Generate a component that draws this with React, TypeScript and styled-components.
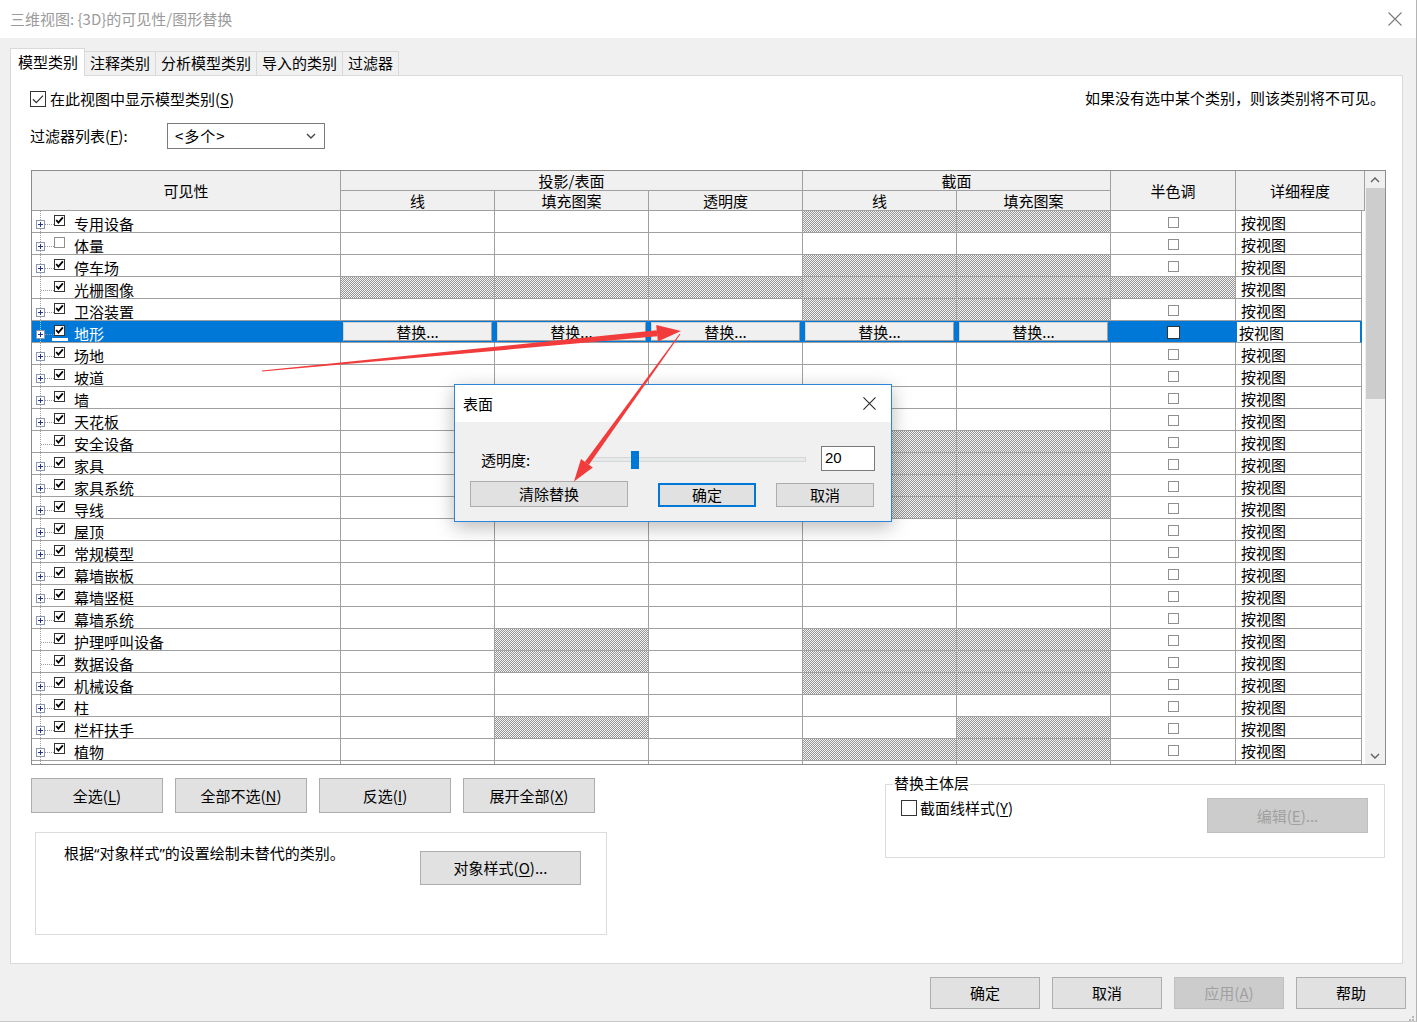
import React from 'react'
import styled, { createGlobalStyle, css } from 'styled-components'

const GlobalStyle = createGlobalStyle`
  html, body {
    margin: 0;
    padding: 0;
    background: #f0f0f0;
  }
  body {
    font-family: 'Noto Sans CJK SC', 'Noto Sans', sans-serif;
    font-size: 15px;
    color: #000;
  }
  * {
    box-sizing: border-box;
  }
`

type Row = {
  name: string
  plus: boolean
  on: boolean
  hatch: number[]
  selected?: boolean
  partial?: boolean
}

const rows: Row[] = [
  { name: '专用设备', plus: true, on: true, hatch: [3, 4] },
  { name: '体量', plus: true, on: false, hatch: [] },
  { name: '停车场', plus: true, on: true, hatch: [3, 4] },
  { name: '光栅图像', plus: false, on: true, hatch: [0, 1, 2, 3, 4, 5] },
  { name: '卫浴装置', plus: true, on: true, hatch: [3, 4] },
  { name: '地形', plus: true, on: true, hatch: [], selected: true },
  { name: '场地', plus: true, on: true, hatch: [] },
  { name: '坡道', plus: true, on: true, hatch: [] },
  { name: '墙', plus: true, on: true, hatch: [] },
  { name: '天花板', plus: true, on: true, hatch: [] },
  { name: '安全设备', plus: false, on: true, hatch: [3, 4] },
  { name: '家具', plus: true, on: true, hatch: [3, 4] },
  { name: '家具系统', plus: true, on: true, hatch: [3, 4] },
  { name: '导线', plus: true, on: true, hatch: [3, 4] },
  { name: '屋顶', plus: true, on: true, hatch: [] },
  { name: '常规模型', plus: true, on: true, hatch: [] },
  { name: '幕墙嵌板', plus: true, on: true, hatch: [] },
  { name: '幕墙竖梃', plus: true, on: true, hatch: [] },
  { name: '幕墙系统', plus: true, on: true, hatch: [] },
  { name: '护理呼叫设备', plus: false, on: true, hatch: [1, 3, 4] },
  { name: '数据设备', plus: false, on: true, hatch: [1, 3, 4] },
  { name: '机械设备', plus: true, on: true, hatch: [3, 4] },
  { name: '柱', plus: true, on: true, hatch: [] },
  { name: '栏杆扶手', plus: true, on: true, hatch: [1, 4] },
  { name: '植物', plus: true, on: true, hatch: [3, 4] },
  // only the top edge of this row shows under the header of the list
  { name: '楼板', plus: true, on: true, hatch: [], partial: true },
]

const GRID_LINE = '#a0a0a0'
const SELECT_BLUE = '#0078d7'

/* ---------- window chrome ---------- */

const Window = styled.div`
  position: relative;
  width: 1417px;
  height: 1022px;
  background: #f0f0f0;
  display: flex;
  flex-direction: column;
  overflow: hidden;
  border-right: 1px solid #b4b4b4;
  border-bottom: 1px solid #c8c8c8;
`

const TitleBar = styled.div`
  height: 38px;
  flex: none;
  background: #fff;
  display: flex;
  align-items: center;
  justify-content: space-between;
  padding: 0 14px 0 10px;
`

const TitleText = styled.span`
  color: #9b9b9b;
  font-size: 15px;
  line-height: 20px;
`

const Tabs = styled.div`
  position: relative;
  z-index: 1;
  display: flex;
  align-items: flex-end;
  height: 27px;
  margin: 10px 0 0 10px;
`

const Tab = styled.div<{ $active?: boolean }>`
  height: 24px;
  padding: 0 5px;
  margin-left: -1px;
  border: 1px solid #d9d9d9;
  border-bottom: none;
  background: #f0f0f0;
  line-height: 22px;
  white-space: nowrap;

  &:first-child {
    margin-left: 0;
  }

  ${(p) =>
    p.$active &&
    css`
      height: 28px;
      margin-bottom: -1px;
      padding: 0 6px 0 7px;
      background: #fff;
      line-height: 25px;
    `}
`

const Panel = styled.div`
  height: 889px;
  margin: 0 13px 0 10px;
  background: #fff;
  border: 1px solid #d9d9d9;
  padding: 0 17px 0 20px;
  display: flex;
  flex-direction: column;
  flex: none;
`

const Acc = styled.span`
  text-decoration: underline;
  text-underline-offset: 2px;
`

const Quote = styled.span`
  font-family: 'Noto Sans', 'Liberation Sans', sans-serif;
`

/* ---------- top controls ---------- */

const TopRow = styled.div`
  margin-top: 15px;
  height: 16px;
  display: flex;
  align-items: center;
  justify-content: space-between;
`

const CheckLabel = styled.label`
  display: flex;
  align-items: center;
  gap: 4px;
  line-height: 20px;
  margin-left: -1px;
`

const Hint = styled.span`
  line-height: 20px;
  margin-top: -3px;
`

const FilterRow = styled.div`
  margin-top: 16px;
  height: 26px;
  display: flex;
  align-items: center;
`

const FilterLabel = styled.span`
  width: 137px;
  margin-left: -1px;
  line-height: 20px;
`

const Select = styled.div`
  width: 158px;
  height: 26px;
  border: 1px solid #7a7a7a;
  background: #fff;
  display: flex;
  align-items: center;
  justify-content: space-between;
  padding: 0 8px 0 7px;
  line-height: 20px;
`

const SelectValue = styled.span`
  letter-spacing: 1px;
`

/* ---------- table ---------- */

const TableFrame = styled.div`
  margin-top: 21px;
  width: 1355px;
  height: 595px;
  border: 1px solid #8c8c8c;
  background: #fff;
  display: flex;
  overflow: hidden;
  flex: none;
`

const GridArea = styled.div`
  width: 1333px;
  display: flex;
  flex-direction: column;
  overflow: hidden;
`

const Header = styled.div`
  display: grid;
  grid-template-columns: 309px repeat(5, 154px) 125px 126px 3px;
  grid-template-rows: 20px 20px;
  background: #f0f0f0;
  flex: none;
`

const HeadCell = styled.div<{ $col: string; $row: string }>`
  grid-column: ${(p) => p.$col};
  grid-row: ${(p) => p.$row};
  border-right: 1px solid ${GRID_LINE};
  border-bottom: 1px solid ${GRID_LINE};
  display: flex;
  align-items: center;
  justify-content: center;
  line-height: 19px;
`

const BodyRow = styled.div`
  display: grid;
  grid-template-columns: 309px repeat(5, 154px) 125px 126px 3px;
  height: 22px;
  flex: none;
`

const hatchFill = css`
  background-color: #e4e4e4;
  background-image: repeating-conic-gradient(#959595 0 25%, #f4f4f4 0 50%);
  background-size: 2px 2px;
`

const Cell = styled.div<{ $hatch?: boolean; $sel?: boolean }>`
  height: 22px;
  border-right: 1px solid ${GRID_LINE};
  border-bottom: 1px solid ${GRID_LINE};
  background: #fff;
  overflow: hidden;
  ${(p) => p.$hatch && hatchFill}
  ${(p) =>
    p.$sel &&
    css`
      background: ${SELECT_BLUE};
      border-right-color: ${SELECT_BLUE};
      padding: 1px 2px 0 2px;
    `}
`

const TreeCell = styled(Cell)`
  display: flex;
  align-items: flex-start;
  background-image: linear-gradient(to bottom, ${(p) => (p.$sel ? '#9cc7ee' : GRID_LINE)} 50%, transparent 50%);
  background-size: 1px 2px;
  background-position: 8px 0;
  background-repeat: repeat-y;
  color: ${(p) => (p.$sel ? '#fff' : '#000')};
  padding: 0;
`

const Gutter = styled.div<{ $plus: boolean }>`
  display: flex;
  width: 22px;
  flex: none;
  padding-left: ${(p) => (p.$plus ? 4 : 9)}px;
  padding-top: 9px;
`

const Connector = styled.div`
  flex: 1;
  margin-top: 4px;
  height: 0;
  border-top: 1px dotted #9a9a9a;
`

const TreeCheck = styled.div`
  display: flex;
  flex-direction: column;
  align-items: center;
  margin-top: 4px;
  width: 11px;
`

const FocusBar = styled.div`
  width: 16px;
  height: 3px;
  margin-top: 2px;
  background: #fff;
`

const TreeLabel = styled.span`
  margin-left: 9px;
  padding-top: 3px;
  line-height: 20px;
  white-space: nowrap;
`

const HalftoneCell = styled(Cell)`
  display: flex;
  justify-content: center;
  padding-top: 6px;
  ${(p) =>
    p.$sel &&
    css`
      padding: 5px 0 0 0;
    `}
`

const DetailCell = styled(Cell)`
  padding: 2px 0 0 5px;
  line-height: 20px;
  ${(p) =>
    p.$sel &&
    css`
      background: #fff;
      border-right: 2px solid ${SELECT_BLUE};
      box-shadow: inset 0 1px 0 ${SELECT_BLUE}, inset 1px 0 0 ${SELECT_BLUE};
      padding: 2px 0 0 3px;
    `}
`

const BlankCell = styled.div`
  height: 22px;
  background: #fff;
`

const ReplaceButton = styled.div`
  height: 19px;
  background: #f0f0f0;
  border: 1px solid #d2d2d2;
  border-right-color: #a0a0a0;
  border-bottom-color: #a0a0a0;
  text-align: center;
  line-height: 17px;
`

const Scrollbar = styled.div`
  width: 20px;
  flex: none;
  background: #f0f0f0;
  display: flex;
  flex-direction: column;
`

const ScrollArrow = styled.div`
  height: 17px;
  flex: none;
  display: flex;
  align-items: center;
  justify-content: center;
`

const ScrollTrack = styled.div`
  flex: 1;
`

const ScrollThumb = styled.div`
  height: 211px;
  margin-left: 1px;
  background: #cdcdcd;
`

/* ---------- bottom of panel ---------- */

const BottomArea = styled.div`
  display: flex;
  justify-content: space-between;
  align-items: flex-start;
`

const LeftColumn = styled.div`
  margin-top: 13px;
  display: flex;
  flex-direction: column;
`

const ButtonRow = styled.div`
  display: flex;
  gap: 12px;
`

const Button = styled.div<{ $w: number; $h: number; $disabled?: boolean; $default?: boolean }>`
  width: ${(p) => p.$w}px;
  height: ${(p) => p.$h}px;
  flex: none;
  background: #e1e1e1;
  border: 1px solid #adadad;
  display: flex;
  align-items: center;
  justify-content: center;
  line-height: 20px;
  white-space: nowrap;
  ${(p) =>
    p.$disabled &&
    css`
      background: #cccccc;
      border-color: #bfbfbf;
      color: #a0a0a0;
    `}
  ${(p) =>
    p.$default &&
    css`
      border: 2px solid ${SELECT_BLUE};
    `}
`

const InfoBox = styled.div`
  margin: 19px 0 0 4px;
  width: 572px;
  height: 103px;
  border: 1px solid #dcdcdc;
  display: flex;
  justify-content: space-between;
  align-items: flex-start;
  padding: 9px 25px 0 28px;
`

const InfoText = styled.span`
  line-height: 22px;
`

const InfoButtonSlot = styled.div`
  margin-top: 9px;
`

const GroupBox = styled.div`
  margin-top: 19px;
  width: 500px;
  height: 74px;
  border: 1px solid #dcdcdc;
  padding: 0 16px 0 15px;
  display: flex;
  flex-direction: column;
`

const Legend = styled.span`
  align-self: flex-start;
  margin: -12px 0 0 -8px;
  padding: 0 1px;
  background: #fff;
  line-height: 20px;
`

const GroupBody = styled.div`
  margin-top: 5px;
  display: flex;
  justify-content: space-between;
  align-items: flex-start;
`

const GroupCheck = styled.label`
  margin-top: 1px;
  display: flex;
  align-items: center;
  gap: 3px;
  line-height: 18px;
`

const Footer = styled.div`
  display: flex;
  justify-content: flex-end;
  gap: 12px;
  padding: 13px 10px 0 0;
`

const Grip = styled.div`
  position: absolute;
  right: 1px;
  bottom: 1px;
  width: 12px;
  height: 12px;
`

/* ---------- overlay dialog ---------- */

const Dialog = styled.div`
  position: absolute;
  left: 454px;
  top: 384px;
  width: 438px;
  height: 138px;
  border: 1px solid #2b86d9;
  background: #f0f0f0;
  box-shadow: 0 5px 18px rgba(0, 0, 0, 0.28);
  display: flex;
  flex-direction: column;
  z-index: 2;
`

const DialogTitle = styled.div`
  height: 37px;
  flex: none;
  background: #fff;
  display: flex;
  align-items: center;
  justify-content: space-between;
  padding: 0 15px 0 8px;
  line-height: 20px;
`

const SliderRow = styled.div`
  margin-top: 24px;
  height: 25px;
  display: flex;
  align-items: center;
  padding: 0 16px 0 26px;
`

const SliderLabel = styled.span`
  width: 107px;
  line-height: 20px;
  margin-top: 2px;
`

const Track = styled.div`
  position: relative;
  width: 218px;
  height: 5px;
  margin-top: 2px;
  background: #e7eaea;
  border: 1px solid #d6d6d6;
`

const Thumb = styled.div`
  position: absolute;
  left: 42px;
  top: -7px;
  width: 8px;
  height: 18px;
  background: ${SELECT_BLUE};
`

const NumberInput = styled.div`
  margin-left: 15px;
  width: 54px;
  height: 25px;
  border: 1px solid #7a7a7a;
  background: #fff;
  padding: 0 0 0 3px;
  font-family: 'Liberation Sans', sans-serif;
  font-size: 15px;
  line-height: 21px;
`

const DialogButtons = styled.div`
  margin-top: 10px;
  display: flex;
  align-items: flex-end;
  padding-left: 15px;
  gap: 30px;

  & > :last-child {
    margin-left: -10px;
  }
`

const ArrowLayer = styled.svg`
  position: absolute;
  left: 0;
  top: 0;
  z-index: 3;
  pointer-events: none;
`

/* ---------- drawings ---------- */

const CloseIcon = ({ size = 14, color = '#7a7a7a' }: { size?: number; color?: string }) => (
  <svg width={size} height={size} viewBox="0 0 14 14">
    <path d="M0.5 0.5 L13.5 13.5 M13.5 0.5 L0.5 13.5" stroke={color} strokeWidth="1.1" fill="none" />
  </svg>
)

const BigCheckbox = ({ on }: { on: boolean }) => (
  <svg width="16" height="16" viewBox="0 0 16 16">
    <rect x="0.5" y="0.5" width="15" height="15" fill="#fff" stroke="#333" />
    {on && <path d="M3 8.3 L6.3 11.6 L13 4.6" fill="none" stroke="#333" strokeWidth="1.3" />}
  </svg>
)

const SmallCheckbox = ({ on, light, size = 11 }: { on?: boolean; light?: boolean; size?: number }) => (
  <svg width={size} height={size} viewBox={`0 0 ${size} ${size}`}>
    <rect
      x="0.5"
      y="0.5"
      width={size - 1}
      height={size - 1}
      fill="#fff"
      stroke={light ? '#8f8f8f' : '#333'}
    />
    {on && <path d="M2.2 5 L4.4 7.6 L8.9 2.3" fill="none" stroke="#000" strokeWidth="1.8" />}
  </svg>
)

const PlusBox = () => (
  <svg width="9" height="9" viewBox="0 0 9 9">
    <rect x="0.5" y="0.5" width="8" height="8" fill="#fff" stroke="#8d98b0" />
    <path d="M2 4.5 H7 M4.5 2 V7" stroke="#22338a" strokeWidth="1" />
  </svg>
)

const Chevron = ({ up, color = '#5f5f5f' }: { up?: boolean; color?: string }) => (
  <svg width="10" height="6" viewBox="0 0 10 6">
    <path d={up ? 'M1 5 L5 1 L9 5' : 'M1 1 L5 5 L9 1'} fill="none" stroke={color} strokeWidth="1.4" />
  </svg>
)

const GripDots = () => (
  <svg width="12" height="12" viewBox="0 0 12 12">
    {[
      [9, 1],
      [6, 4],
      [9, 4],
      [3, 7],
      [6, 7],
      [9, 7],
    ].map(([x, y]) => (
      <rect key={`${x}-${y}`} x={x} y={y + 2} width="2" height="2" fill="#b8b8b8" />
    ))}
  </svg>
)

const RED = '#f23c3c'

const Arrows = () => (
  <ArrowLayer width="1417" height="1022" viewBox="0 0 1417 1022">
    {/* first arrow: from the label column to the transparency cell */}
    <polygon points="262,371.5 657.4,336.3 656.8,330.3 261.9,370.5" fill={RED} />
    <polygon points="657.9,341.6 681,331 656.2,325" fill={RED} />
    {/* second arrow: from the cell down to 清除替换 */}
    <polygon points="680.4,334.3 588.9,464.7 584.9,461.7 679.6,333.7" fill={RED} />
    <polygon points="592.8,467.5 574,481.5 581,458.9" fill={RED} />
  </ArrowLayer>
)

const SurfaceDialog = () => (
  <Dialog>
    <DialogTitle>
      <span>表面</span>
      <CloseIcon size={13} color="#222" />
    </DialogTitle>
    <SliderRow>
      <SliderLabel>透明度:</SliderLabel>
      <Track>
        <Thumb />
      </Track>
      <NumberInput>20</NumberInput>
    </SliderRow>
    <DialogButtons>
      <Button $w={158} $h={26}>
        清除替换
      </Button>
      <Button $w={98} $h={24} $default>
        确定
      </Button>
      <Button $w={98} $h={24}>
        取消
      </Button>
    </DialogButtons>
  </Dialog>
)

const TableRow = ({ row }: { row: Row }) => {
  const sel = !!row.selected
  const valueCols = [0, 1, 2, 3, 4]
  return (
    <BodyRow>
      <TreeCell $sel={sel}>
        <Gutter $plus={row.plus}>
          {row.plus && <PlusBox />}
          <Connector />
        </Gutter>
        <TreeCheck>
          <SmallCheckbox on={row.on} light={!row.on} />
          {sel && <FocusBar />}
        </TreeCheck>
        {!row.partial && <TreeLabel>{row.name}</TreeLabel>}
      </TreeCell>
      {valueCols.map((c) => (
        <Cell key={c} $hatch={row.hatch.includes(c)} $sel={sel}>
          {sel && <ReplaceButton>替换...</ReplaceButton>}
        </Cell>
      ))}
      <HalftoneCell $hatch={row.hatch.includes(5)} $sel={sel}>
        {!row.hatch.includes(5) &&
          (sel ? <SmallCheckbox size={13} /> : <SmallCheckbox light />)}
      </HalftoneCell>
      <DetailCell $sel={sel}>{!row.partial && '按视图'}</DetailCell>
      <BlankCell />
    </BodyRow>
  )
}

const VisibilityTable = () => (
  <TableFrame>
    <GridArea>
      <Header>
        <HeadCell $col="1" $row="1 / 3">
          可见性
        </HeadCell>
        <HeadCell $col="2 / 5" $row="1">
          投影/表面
        </HeadCell>
        <HeadCell $col="5 / 7" $row="1">
          截面
        </HeadCell>
        <HeadCell $col="7" $row="1 / 3">
          半色调
        </HeadCell>
        <HeadCell $col="8 / 10" $row="1 / 3">
          详细程度
        </HeadCell>
        <HeadCell $col="2" $row="2">
          线
        </HeadCell>
        <HeadCell $col="3" $row="2">
          填充图案
        </HeadCell>
        <HeadCell $col="4" $row="2">
          透明度
        </HeadCell>
        <HeadCell $col="5" $row="2">
          线
        </HeadCell>
        <HeadCell $col="6" $row="2">
          填充图案
        </HeadCell>
      </Header>
      {rows.map((r) => (
        <TableRow key={r.name} row={r} />
      ))}
    </GridArea>
    <Scrollbar>
      <ScrollArrow>
        <Chevron up />
      </ScrollArrow>
      <ScrollTrack>
        <ScrollThumb />
      </ScrollTrack>
      <ScrollArrow>
        <Chevron />
      </ScrollArrow>
    </Scrollbar>
  </TableFrame>
)

export default function App() {
  return (
    <>
      <GlobalStyle />
      <Window>
        <TitleBar>
          <TitleText>三维视图: {'{3D}'}的可见性/图形替换</TitleText>
          <CloseIcon />
        </TitleBar>

        <Tabs>
          <Tab $active>模型类别</Tab>
          <Tab>注释类别</Tab>
          <Tab>分析模型类别</Tab>
          <Tab>导入的类别</Tab>
          <Tab>过滤器</Tab>
        </Tabs>

        <Panel>
          <TopRow>
            <CheckLabel>
              <BigCheckbox on />
              <span>
                在此视图中显示模型类别(<Acc>S</Acc>)
              </span>
            </CheckLabel>
            <Hint>如果没有选中某个类别，则该类别将不可见。</Hint>
          </TopRow>

          <FilterRow>
            <FilterLabel>
              过滤器列表(<Acc>F</Acc>):
            </FilterLabel>
            <Select>
              <SelectValue>&lt;多个&gt;</SelectValue>
              <Chevron color="#444" />
            </Select>
          </FilterRow>

          <VisibilityTable />

          <BottomArea>
            <LeftColumn>
              <ButtonRow>
                <Button $w={132} $h={35}>
                  全选(<Acc>L</Acc>)
                </Button>
                <Button $w={132} $h={35}>
                  全部不选(<Acc>N</Acc>)
                </Button>
                <Button $w={132} $h={35}>
                  反选(<Acc>I</Acc>)
                </Button>
                <Button $w={132} $h={35}>
                  展开全部(<Acc>X</Acc>)
                </Button>
              </ButtonRow>
              <InfoBox>
                <InfoText>
                  根据<Quote>“</Quote>对象样式<Quote>”</Quote>的设置绘制未替代的类别。
                </InfoText>
                <InfoButtonSlot>
                  <Button $w={161} $h={34}>
                    对象样式(<Acc>O</Acc>)...
                  </Button>
                </InfoButtonSlot>
              </InfoBox>
            </LeftColumn>

            <GroupBox>
              <Legend>替换主体层</Legend>
              <GroupBody>
                <GroupCheck>
                  <BigCheckbox on={false} />
                  <span>
                    截面线样式(<Acc>Y</Acc>)
                  </span>
                </GroupCheck>
                <Button $w={161} $h={35} $disabled>
                  编辑(<Acc>E</Acc>)...
                </Button>
              </GroupBody>
            </GroupBox>
          </BottomArea>
        </Panel>

        <Footer>
          <Button $w={110} $h={32}>
            确定
          </Button>
          <Button $w={110} $h={32}>
            取消
          </Button>
          <Button $w={110} $h={32} $disabled>
            应用(<Acc>A</Acc>)
          </Button>
          <Button $w={110} $h={32}>
            帮助
          </Button>
        </Footer>

        <Grip>
          <GripDots />
        </Grip>

        <SurfaceDialog />
        <Arrows />
      </Window>
    </>
  )
}
